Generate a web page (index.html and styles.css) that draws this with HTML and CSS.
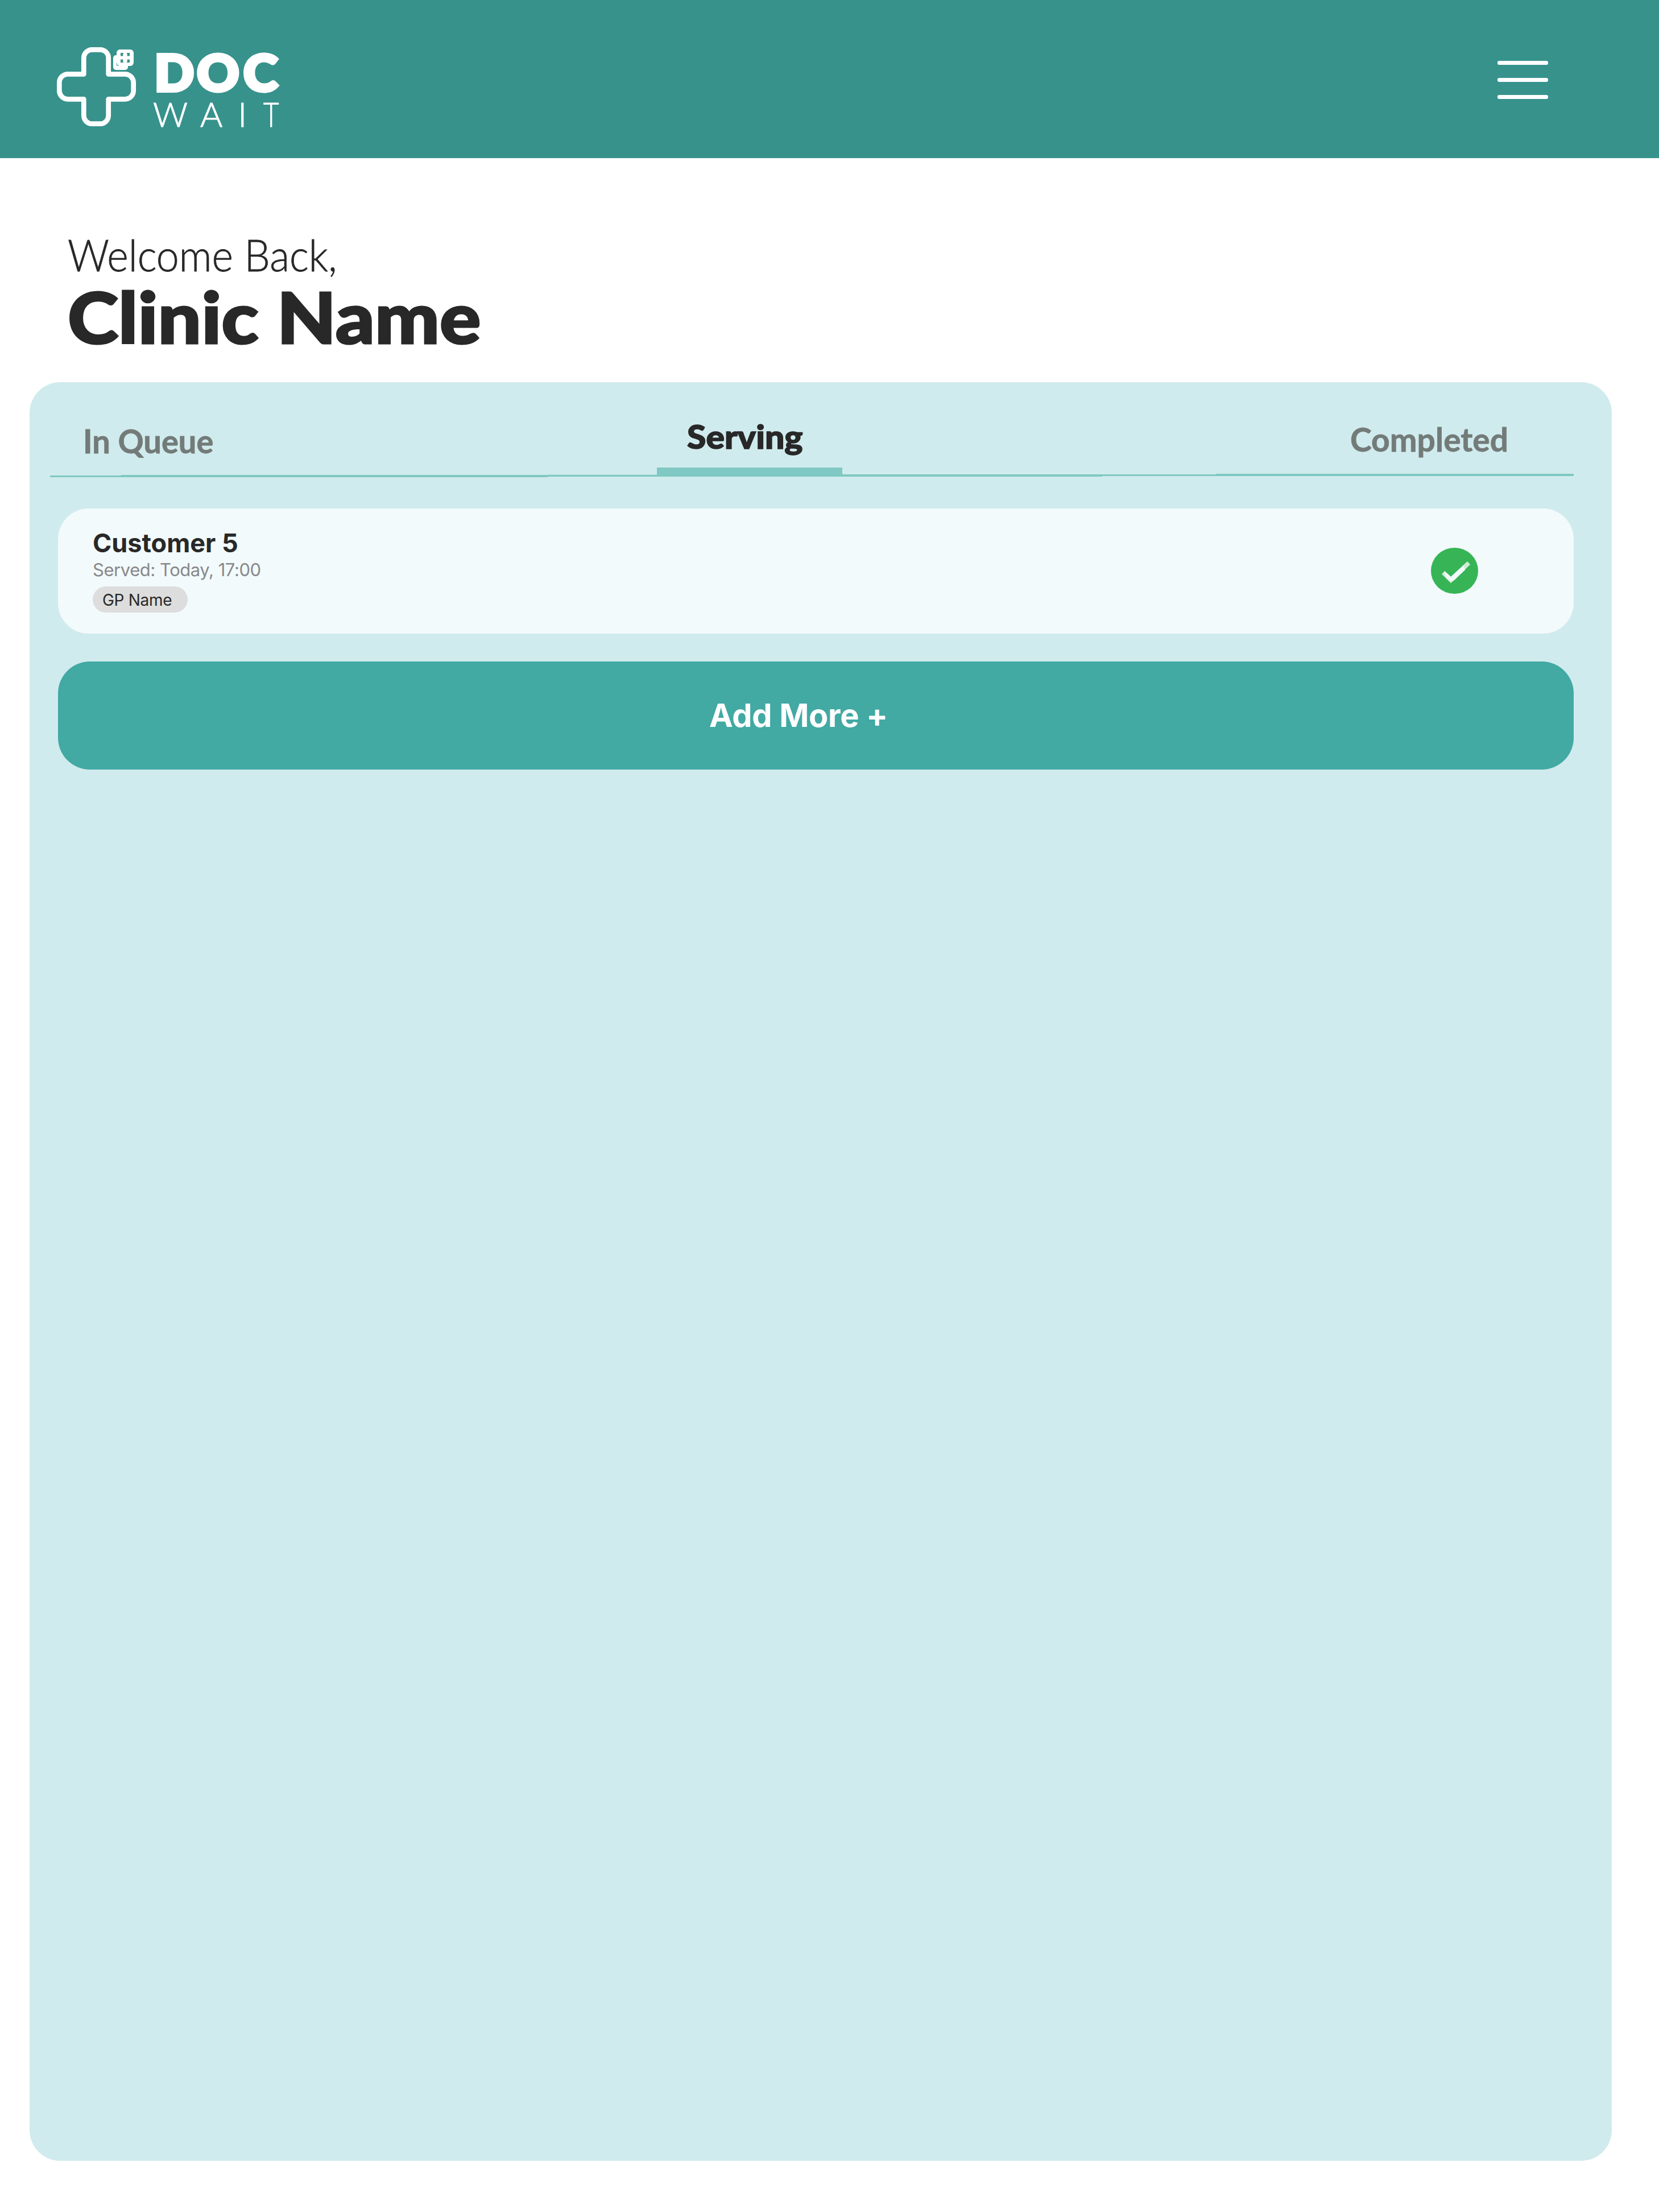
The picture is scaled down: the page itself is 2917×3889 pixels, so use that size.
FILE: index.html
```
<!DOCTYPE html>
<html lang="en">
<head>
<meta charset="utf-8">
<title>DocWait – Clinic dashboard</title>
<link rel="stylesheet" href="styles.css">
</head>
<body>
<header class="topbar">
  <svg class="logo" viewBox="0 0 400 150" role="img" aria-label="DOC WAIT">
    <path class="logo-cross" d="M47.3 50.3V22a14.5 14.5 0 0 1 14.5-14.7H76A14.5 14.5 0 0 1 90.7 22V50.3H119.500a15 15 0 0 1 15.200 15.200V79a15 15 0 0 1-15.200 15.300H90.700V123A14.500 14.500 0 0 1 76 137.700H61.800A14.500 14.500 0 0 1 47.300 123V94.300H19.500A15 15 0 0 1 4.300 79V65.500A15 15 0 0 1 19.500 50.300Z"/>
    <rect class="logo-solid" x="99" y="17" width="26" height="26" rx="5"/>
    <rect class="logo-solid" x="105" y="7" width="30" height="29" rx="6"/>
    <path class="logo-gap" d="M112 13h5.300v1h-1v4.500h-4.300zM128 13h-5.300v1h1v4.500h4.300zM112 30h5.300v-1h-1v-4.500h-4.300zM128 30h-5.300v-1h1v-4.500h4.300zM105 31h1v3.500h3v1h-4z"/>
    <text class="logo-doc" transform="scale(1.04 1)" x="165 236.700 315.500" y="79.500">DOC</text>
    <text class="logo-wait" x="169 252 318.500" y="143">WAI</text>
    <text class="logo-wait" x="363" y="143" textLength="27.500" lengthAdjust="spacingAndGlyphs">T</text>
  </svg>
  <div class="menu" role="button" aria-label="Menu">
    <span class="menu-line"></span>
    <span class="menu-line"></span>
    <span class="menu-line"></span>
  </div>
</header>

<section class="greeting">
  <p class="greeting-hello">Welcome Back,</p>
  <h1 class="greeting-name">Clinic Name</h1>
</section>

<main class="panel">
  <nav class="tabs">
    <div class="tab tab-queue"><span class="tab-label">In Queue</span></div>
    <div class="tab tab-serving"><span class="tab-label">Serving</span></div>
    <div class="tab tab-completed"><span class="tab-label">Completed</span></div>
  </nav>
  <svg class="rule" viewBox="0 0 2679 6" preserveAspectRatio="none">
    <path d="M0 3H125V2H875V1.700H1067V1.300H1393V1H2050V0H2679V4H1850V5H875V6H0z"/>
  </svg>

  <article class="card">
    <div class="card-info">
      <h2 class="card-title">Customer 5</h2>
      <p class="card-time">Served: Today, 17:00</p>
      <span class="chip">GP Name</span>
    </div>
    <svg class="check" viewBox="0 0 83 81">
      <ellipse class="check-disc" cx="41.500" cy="40.500" rx="41.500" ry="40.500"/>
      <path class="check-soft" d="M19 46.300L24 41 35 51 64 24 69 29.500 35 62.300Z"/>
      <path class="check-mark" d="M24 41L35 51 58 30.500Q58 36 60.500 38.500L41 57Q36 60 32 57 24 51 24 41Z"/>
    </svg>
  </article>

  <button class="add" type="button">Add More +</button>
</main>
</body>
</html>
```
FILE: styles.css
```
* { box-sizing: border-box; }

body {
  margin: 0;
  background: #fff;
  color: #282828;
  font-family: Inter, "Liberation Sans", sans-serif;
}

h1, h2, p { margin: 0; }
svg { display: block; }

.topbar {
  display: flex;
  justify-content: space-between;
  align-items: flex-start;
  height: 278px;
  padding: 80px 195px 0 100px;
  background: #37928c;
}

.logo { width: 400px; height: 150px; }
.logo-cross { fill: none; stroke: #fff; stroke-width: 8.7; stroke-linejoin: round; }
.logo-solid { fill: #fff; }
.logo-gap { fill: #37928c; }
.logo-doc {
  fill: #fff;
  stroke: #fff;
  stroke-width: 6;
  font: 900 88px Lato, sans-serif;
}
.logo-wait { fill: #fff; stroke: #fff; stroke-width: 1; font: 300 60px Lato, sans-serif; }

.menu {
  display: flex;
  flex-direction: column;
  gap: 23.500px;
  width: 89px;
  margin-top: 27px;
}
.menu-line { height: 6.500px; border-radius: 3px; background: #fff; }

.greeting {
  height: 341px;
  padding: 126px 0 0 119px;
  font-family: Lato, sans-serif;
}
.greeting-hello {
  width: max-content;
  font-size: 77px;
  font-weight: 300;
  line-height: 87px;
  -webkit-text-stroke: 0.8px #282828;
  transform: scaleX(0.932);
  transform-origin: left;
}
.greeting-name {
  width: max-content;
  font-size: 124px;
  font-weight: 900;
  line-height: 130px;
  -webkit-text-stroke: 3px #282828;
  transform: scaleX(1.09);
  transform-origin: left;
}

.panel {
  width: 2782px;
  height: 3127px;
  margin: 53px 0 0 52px;
  padding: 0 67px 0 50px;
  border-radius: 54px;
  background: #d0ebed;
}

.tabs {
  display: grid;
  grid-template-columns: 1067px 326px 1fr;
  height: 166px;
  margin-left: -14px;
  font: 700 57px/60px Lato, sans-serif;
  color: #737b79;
}
.tab-label { display: inline-block; transform-origin: left; -webkit-text-stroke: 0.8px currentColor; }
.tab-queue { padding: 73px 0 0 58px; }
.tab-queue .tab-label { transform: scaleX(0.983); }
.tab-serving {
  padding: 65px 0 0 53px;
  border-bottom: 16px solid #80c8c3;
  font-size: 57px;
  font-weight: 900;
  color: #282828;
}
.tab-serving .tab-label { transform: scaleX(1.065); -webkit-text-stroke: 1.500px currentColor; }
.tab-completed { padding: 70px 0 0 893px; }

.rule {
  width: 2679px;
  height: 6px;
  margin: -5px 0 0 -14px;
  fill: #80c8c3;
}

.card {
  display: flex;
  justify-content: space-between;
  align-items: flex-start;
  height: 220px;
  margin-top: 55px;
  padding: 36px 168px 0 61px;
  border-radius: 54px;
  background: #f2fafc;
}
.card-title { font-size: 45px; font-weight: 700; line-height: 50px; }
.card-time { margin-top: 4px; font-size: 31px; line-height: 36px; letter-spacing: -0.45px; color: #888; }
.chip {
  display: block;
  width: 167px;
  height: 46px;
  margin-top: 11px;
  padding-left: 17px;
  border-radius: 23px;
  background: #ddd;
  font-size: 28px;
  line-height: 48px;
  letter-spacing: -0.3px;
}

.check { width: 83px; height: 81px; margin-top: 33px; }
.check-disc { fill: #37b556; }
.check-soft { fill: #d3ebd6; }
.check-mark { fill: #f2fafc; }

.add {
  display: block;
  width: 100%;
  height: 190px;
  margin-top: 49px;
  padding: 0 0 0 1145px;
  border: 0;
  border-radius: 56px;
  background: #42a9a3;
  color: #fff;
  font: 700 56px/60px Inter, sans-serif;
  letter-spacing: -0.3px;
  text-align: left;
}
```
